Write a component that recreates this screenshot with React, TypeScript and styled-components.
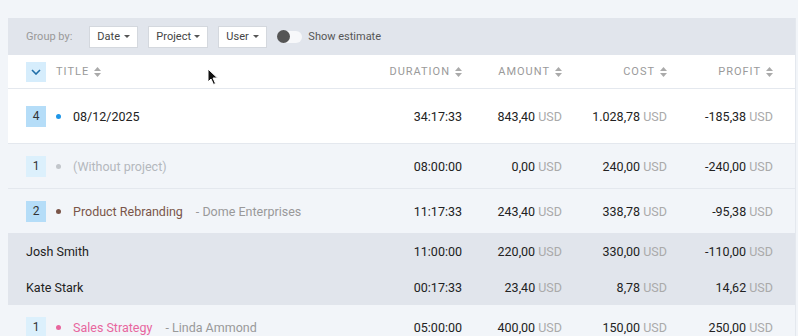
import React from 'react';
import styled, { createGlobalStyle } from 'styled-components';

const GlobalStyle = createGlobalStyle`
  html, body {
    margin: 0;
    padding: 0;
    background: #f2f5f9;
    font-family: Roboto, "Liberation Sans", Arial, sans-serif;
  }
`;

const Page = styled.div`
  position: relative;
  height: 336px;
  overflow: hidden;
  padding: 18px 2px 0 8px;
  box-sizing: border-box;
`;

const Panel = styled.div`
  border-right: 1px solid #e4e8ee;
`;

const Toolbar = styled.div`
  display: flex;
  align-items: center;
  height: 37px;
  padding: 0 18px;
  background: #e1e5ec;
  font-size: 11px;
`;

const GroupLabel = styled.span`
  color: #999;
  margin-right: 17px;
`;

const Select = styled.div<{ w: number }>`
  display: flex;
  align-items: center;
  justify-content: space-between;
  box-sizing: border-box;
  height: 22px;
  width: ${(p) => p.w}px;
  padding: 0 7px 0 7px;
  margin-right: 10px;
  background: #fff;
  border: 1px solid #d4d8de;
  color: #444;
  font-size: 11px;
`;

const Caret = styled.span`
  width: 0;
  height: 0;
  border-left: 3px solid transparent;
  border-right: 3px solid transparent;
  border-top: 3px solid #555;
`;

const Toggle = styled.span`
  position: relative;
  display: inline-block;
  width: 24px;
  height: 12px;
  margin: 0 6px 0 1px;
  border-radius: 7px;
  background: #f7f8fa;
  &::after {
    content: '';
    position: absolute;
    left: -1px;
    top: -0.5px;
    width: 13px;
    height: 13px;
    border-radius: 50%;
    background: #555;
  }
`;

const ToggleLabel = styled.span`
  color: #555;
`;

const Grid = styled.div<{ bg: string; h: number; line?: boolean }>`
  display: grid;
  grid-template-columns: 1fr 100px 100px 105px 106px;
  align-items: center;
  height: ${(p) => p.h}px;
  padding: 0 22px 0 18px;
  background: ${(p) => p.bg};
  border-bottom: ${(p) => (p.line ? '1px solid #e4e8ee' : 'none')};
  box-sizing: border-box;
  font-size: 12.5px;
  color: #222;
`;

const HeadCell = styled.div<{ right?: boolean }>`
  display: flex;
  align-items: center;
  justify-content: ${(p) => (p.right ? 'flex-end' : 'flex-start')};
  gap: 5px;
  font-size: 11px;
  letter-spacing: 1px;
  color: #9a9a9a;
`;

const Chevron = styled.span`
  display: flex;
  align-items: center;
  justify-content: center;
  width: 20px;
  height: 20px;
  margin-right: 5px;
  background: #d6edfc;
`;

const TitleCell = styled.div`
  display: flex;
  align-items: center;
  white-space: nowrap;
`;

const Badge = styled.span<{ light?: boolean }>`
  display: flex;
  align-items: center;
  justify-content: center;
  width: 20px;
  height: 21px;
  background: ${(p) => (p.light ? '#dcf0fc' : '#b5ddf8')};
  color: #333;
  font-size: 12px;
`;

const Dot = styled.span<{ color: string }>`
  width: 5px;
  height: 5px;
  border-radius: 50%;
  margin: 0 12px 0 10px;
  background: ${(p) => p.color};
`;

const Name = styled.span<{ color: string }>`
  color: ${(p) => p.color};
  font-size: 12.5px;
`;

const Client = styled.span`
  color: #999;
  font-size: 12.5px;
  margin-left: 13px;
`;

const Value = styled.div`
  text-align: right;
  white-space: nowrap;
`;

const Usd = styled.span`
  color: #aaa;
`;

const Cursor = styled.svg`
  position: absolute;
  left: 207px;
  top: 68px;
`;

const SortIcon = () => (
  <svg width="7" height="10" viewBox="0 0 7 10">
    <path d="M3.5 0 L7 4 H0 Z M3.5 10 L7 6 H0 Z" fill="#aaa" />
  </svg>
);

type Row = {
  badge?: string;
  light?: boolean;
  dot?: string;
  name: string;
  color: string;
  client?: string;
  values: [string, string, string, string];
  bg: string;
  h: number;
  line?: boolean;
};

const rows: Row[] = [
  { badge: '4', dot: '#1e96e8', name: '08/12/2025', color: '#222', values: ['34:17:33', '843,40', '1.028,78', '-185,38'], bg: '#fff', h: 55, line: true },
  { badge: '1', light: true, dot: '#c2c6cb', name: '(Without project)', color: '#b4b8bd', values: ['08:00:00', '0,00', '240,00', '-240,00'], bg: '#f2f5f9', h: 45, line: true },
  { badge: '2', dot: '#7a5549', name: 'Product Rebranding', color: '#7a5549', client: '- Dome Enterprises', values: ['11:17:33', '243,40', '338,78', '-95,38'], bg: '#f2f5f9', h: 44 },
  { name: 'Josh Smith', color: '#222', values: ['11:00:00', '220,00', '330,00', '-110,00'], bg: '#e1e5ec', h: 36 },
  { name: 'Kate Stark', color: '#222', values: ['00:17:33', '23,40', '8,78', '14,62'], bg: '#e1e5ec', h: 36 },
  { badge: '1', light: true, dot: '#e8669e', name: 'Sales Strategy', color: '#e8669e', client: '- Linda Ammond', values: ['05:00:00', '400,00', '150,00', '250,00'], bg: '#f2f5f9', h: 44 },
];

export default function App() {
  return (
    <Page>
      <GlobalStyle />
      <Panel>
        <Toolbar>
          <GroupLabel>Group by:</GroupLabel>
          <Select w={49}>Date <Caret /></Select>
          <Select w={60}>Project <Caret /></Select>
          <Select w={49}>User <Caret /></Select>
          <Toggle />
          <ToggleLabel>Show estimate</ToggleLabel>
        </Toolbar>
        <Grid bg="#fff" h={34} line>
          <HeadCell>
            <Chevron>
              <svg width="10" height="6" viewBox="0 0 10 6">
                <path d="M1 1 L5 5 L9 1" fill="none" stroke="#1f6ea8" strokeWidth="1.6" />
              </svg>
            </Chevron>
            TITLE <SortIcon />
          </HeadCell>
          <HeadCell right>DURATION <SortIcon /></HeadCell>
          <HeadCell right>AMOUNT <SortIcon /></HeadCell>
          <HeadCell right>COST <SortIcon /></HeadCell>
          <HeadCell right>PROFIT <SortIcon /></HeadCell>
        </Grid>
        {rows.map((r, i) => (
          <Grid key={i} bg={r.bg} h={r.h} line={r.line}>
            <TitleCell>
              {r.badge && <Badge light={r.light}>{r.badge}</Badge>}
              {r.dot && <Dot color={r.dot} />}
              <Name color={r.color}>{r.name}</Name>
              {r.client && <Client>{r.client}</Client>}
            </TitleCell>
            <Value>{r.values[0]}</Value>
            <Value>{r.values[1]} <Usd>USD</Usd></Value>
            <Value>{r.values[2]} <Usd>USD</Usd></Value>
            <Value>{r.values[3]} <Usd>USD</Usd></Value>
          </Grid>
        ))}
      </Panel>
      <Cursor width="12" height="18" viewBox="0 0 12 18">
        <path d="M1 1 L1 14 L4 11 L6.5 16.5 L8.5 15.5 L6 10 L10.5 10 Z" fill="#111" stroke="#fff" strokeWidth="1" />
      </Cursor>
    </Page>
  );
}
